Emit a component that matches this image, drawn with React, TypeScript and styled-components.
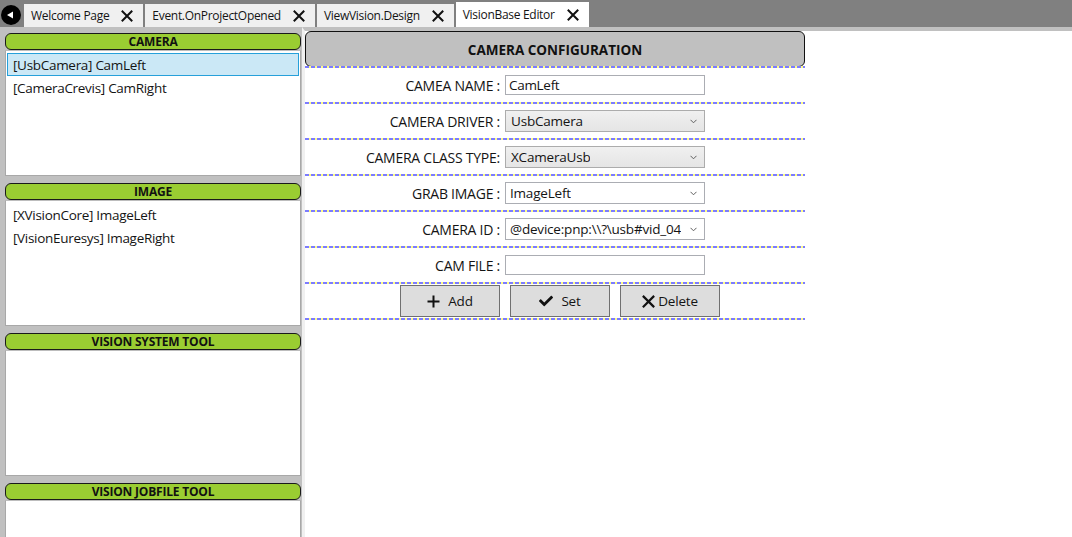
import React from 'react';
import styled, { createGlobalStyle, css } from 'styled-components';
import { FaCheck } from 'react-icons/fa';

const GlobalStyle = createGlobalStyle`
  html, body {
    margin: 0;
    padding: 0;
    background: #ffffff;
    font-family: "Open Sans", "Noto Sans", sans-serif;
    color: #141414;
  }
  * { box-sizing: border-box; }
`;

const tabs = ['Welcome Page', 'Event.OnProjectOpened', 'ViewVision.Design', 'VisionBase Editor'];

const sections = [
  { title: 'CAMERA', items: ['[UsbCamera] CamLeft', '[CameraCrevis] CamRight'], selected: 0 },
  { title: 'IMAGE', items: ['[XVisionCore] ImageLeft', '[VisionEuresys] ImageRight'], selected: -1 },
  { title: 'VISION SYSTEM TOOL', items: [], selected: -1 },
  { title: 'VISION JOBFILE TOOL', items: [], selected: -1 },
];

type Field =
  | { label: string; kind: 'text'; value: string }
  | { label: string; kind: 'combo'; value: string; plain?: boolean };

const fields: Field[] = [
  { label: 'CAMEA NAME :', kind: 'text', value: 'CamLeft' },
  { label: 'CAMERA DRIVER :', kind: 'combo', value: 'UsbCamera' },
  { label: 'CAMERA CLASS TYPE:', kind: 'combo', value: 'XCameraUsb' },
  { label: 'GRAB IMAGE :', kind: 'combo', value: 'ImageLeft', plain: true },
  { label: 'CAMERA ID :', kind: 'combo', value: '@device:pnp:\\\\?\\usb#vid_04', plain: true },
  { label: 'CAM FILE :', kind: 'text', value: '' },
];

const CloseGlyph = ({ size = 12 }: { size?: number }) => (
  <svg width={size} height={size} viewBox="0 0 12 12">
    <path d="M1.5 1.5 L10.5 10.5 M10.5 1.5 L1.5 10.5" stroke="#111" strokeWidth="2" strokeLinecap="square" />
  </svg>
);

const PlusGlyph = () => (
  <svg width="13" height="13" viewBox="0 0 13 13">
    <path d="M6.5 0.5 V12.5 M0.5 6.5 H12.5" stroke="#111" strokeWidth="2" />
  </svg>
);

const Chevron = () => (
  <svg width="7" height="5" viewBox="0 0 7 5">
    <path d="M0.5 0.8 L3.5 3.8 L6.5 0.8" stroke="#606060" strokeWidth="1" fill="none" />
  </svg>
);

const App = () => {
  return (
    <>
      <GlobalStyle />
      <Window>
        <TabBar>
          <BackButton>
            <svg width="8" height="8" viewBox="0 0 8 8">
              <path d="M1 4 L7 0.5 L7 7.5 Z" fill="#fff" />
            </svg>
          </BackButton>
          {tabs.map((t, i) => (
            <Tab key={t} active={i === tabs.length - 1}>
              <TabLabel>{t}</TabLabel>
              <CloseGlyph />
            </Tab>
          ))}
        </TabBar>
        <Body>
          <Sidebar>
            {sections.map((s) => (
              <Section key={s.title}>
                <SectionHeader>{s.title}</SectionHeader>
                <ListBox>
                  {s.items.map((it, i) => (
                    <ListItem key={it} selected={i === s.selected}>
                      {it}
                    </ListItem>
                  ))}
                </ListBox>
              </Section>
            ))}
          </Sidebar>
          <Main>
            <ConfigPanel>
              <ConfigHeader>CAMERA CONFIGURATION</ConfigHeader>
              <DashLine />
              {fields.map((f) => (
                <React.Fragment key={f.label}>
                  <FieldRow>
                    <FieldLabel>{f.label}</FieldLabel>
                    {f.kind === 'text' ? (
                      <TextBox>{f.value}</TextBox>
                    ) : (
                      <Combo plain={f.plain}>
                        <ComboText>{f.value}</ComboText>
                        <Chevron />
                      </Combo>
                    )}
                  </FieldRow>
                  <DashLine />
                </React.Fragment>
              ))}
              <ButtonRow>
                <ActionButton>
                  <PlusGlyph />
                  <span>Add</span>
                </ActionButton>
                <ActionButton>
                  <FaCheck size={14} color="#111" />
                  <span>Set</span>
                </ActionButton>
                <ActionButton tight>
                  <CloseGlyph size={13} />
                  <span>Delete</span>
                </ActionButton>
              </ButtonRow>
              <DashLine />
            </ConfigPanel>
          </Main>
        </Body>
      </Window>
    </>
  );
};

export default App;

const Window = styled.div`
  width: 1072px;
  height: 537px;
  display: flex;
  flex-direction: column;
  overflow: hidden;
`;

const TabBar = styled.div`
  height: 27px;
  flex: none;
  background: #808080;
  display: flex;
  align-items: flex-end;
  gap: 2px;
  padding-left: 1px;
`;

const BackButton = styled.div`
  width: 20px;
  height: 20px;
  border-radius: 50%;
  background: #000;
  display: flex;
  align-items: center;
  justify-content: center;
  padding-right: 2px;
  align-self: flex-start;
  margin-top: 5px;
  margin-right: 1px;
`;

const Tab = styled.div<{ active?: boolean }>`
  height: 23px;
  display: flex;
  align-items: center;
  gap: 12px;
  padding: 0 10px 0 7px;
  background: #f0f0f0;
  font-size: 12px;
  color: #141414;
  ${({ active }) =>
    active &&
    css`
      height: 25px;
      background: #ffffff;
    `}
`;

const TabLabel = styled.span`
  white-space: nowrap;
  letter-spacing: -0.3px;
`;

const Body = styled.div`
  flex: 1;
  display: flex;
  min-height: 0;
`;

const Sidebar = styled.div`
  width: 302px;
  flex: none;
  background: #c0c0c0;
  padding: 6px 1px 0 5px;
  display: flex;
  flex-direction: column;
  gap: 7px;
`;

const Section = styled.div`
  display: flex;
  flex-direction: column;
`;

const SectionHeader = styled.div`
  height: 17px;
  border: 1px solid #1a1a1a;
  border-radius: 6px;
  background: #9acd32;
  font-size: 12px;
  font-weight: 700;
  line-height: 15px;
  text-align: center;
  color: #111;
  letter-spacing: -0.2px;
`;

const ListBox = styled.div`
  height: 126px;
  background: #ffffff;
  border: 1px solid #a8a8a8;
  border-top-color: #bdbdbd;
  padding: 2px 1px;
`;

const ListItem = styled.div<{ selected?: boolean }>`
  height: 23px;
  padding: 0 5px;
  display: flex;
  align-items: center;
  font-size: 13.5px;
  color: #141414;
  letter-spacing: -0.3px;
  border: 1px solid transparent;
  ${({ selected }) =>
    selected &&
    css`
      background: #cbe8f6;
      border-color: #26a0da;
    `}
`;

const Main = styled.div`
  flex: 1;
  background: #ffffff;
  border-top: 4px solid #c0c0c0;
  border-left: 3px solid #f0f0f0;
`;

const ConfigPanel = styled.div`
  width: 500px;
  display: flex;
  flex-direction: column;
`;

const ConfigHeader = styled.div`
  height: 36px;
  border: 1px solid #111;
  border-radius: 6px;
  background: #c0c0c0;
  display: flex;
  align-items: center;
  justify-content: center;
  font-size: 13.5px;
  font-weight: 700;
  color: #111;
  padding-top: 2px;
`;

const DashLine = styled.div`
  height: 2px;
  flex: none;
  background: repeating-linear-gradient(90deg, #7c7cff 0 4px, #ffff80 4px 6px);
  margin-top: -1px;
  margin-bottom: -1px;
  position: relative;
`;

const FieldRow = styled.div`
  height: 36px;
  display: grid;
  grid-template-columns: 195px 200px;
  column-gap: 5px;
  align-items: center;
`;

const FieldLabel = styled.div`
  text-align: right;
  font-size: 14px;
  color: #141414;
  white-space: nowrap;
  letter-spacing: -0.25px;
`;

const TextBox = styled.div`
  height: 20px;
  border: 1px solid #abadb3;
  background: #fff;
  font-size: 13.5px;
  line-height: 18px;
  padding-left: 3px;
  color: #141414;
  letter-spacing: -0.3px;
`;

const Combo = styled.div<{ plain?: boolean }>`
  height: 22px;
  border: 1px solid #acacac;
  background: linear-gradient(#f0f0f0, #e5e5e5);
  display: flex;
  align-items: center;
  justify-content: space-between;
  padding: 0 7px 0 5px;
  ${({ plain }) =>
    plain &&
    css`
      background: #ffffff;
      border-color: #abadb3;
      padding-left: 4px;
    `}
`;

const ComboText = styled.span`
  font-size: 13.5px;
  color: #141414;
  white-space: nowrap;
  overflow: hidden;
  letter-spacing: -0.2px;
`;

const ButtonRow = styled.div`
  height: 36px;
  display: flex;
  align-items: center;
  gap: 10px;
  padding-left: 95px;
`;

const ActionButton = styled.div<{ tight?: boolean }>`
  width: 100px;
  height: 32px;
  border: 1px solid #707070;
  background: #dddddd;
  display: flex;
  align-items: center;
  justify-content: center;
  gap: ${({ tight }) => (tight ? '3px' : '8px')};
  font-size: 13.5px;
  color: #141414;
  letter-spacing: -0.2px;
`;
